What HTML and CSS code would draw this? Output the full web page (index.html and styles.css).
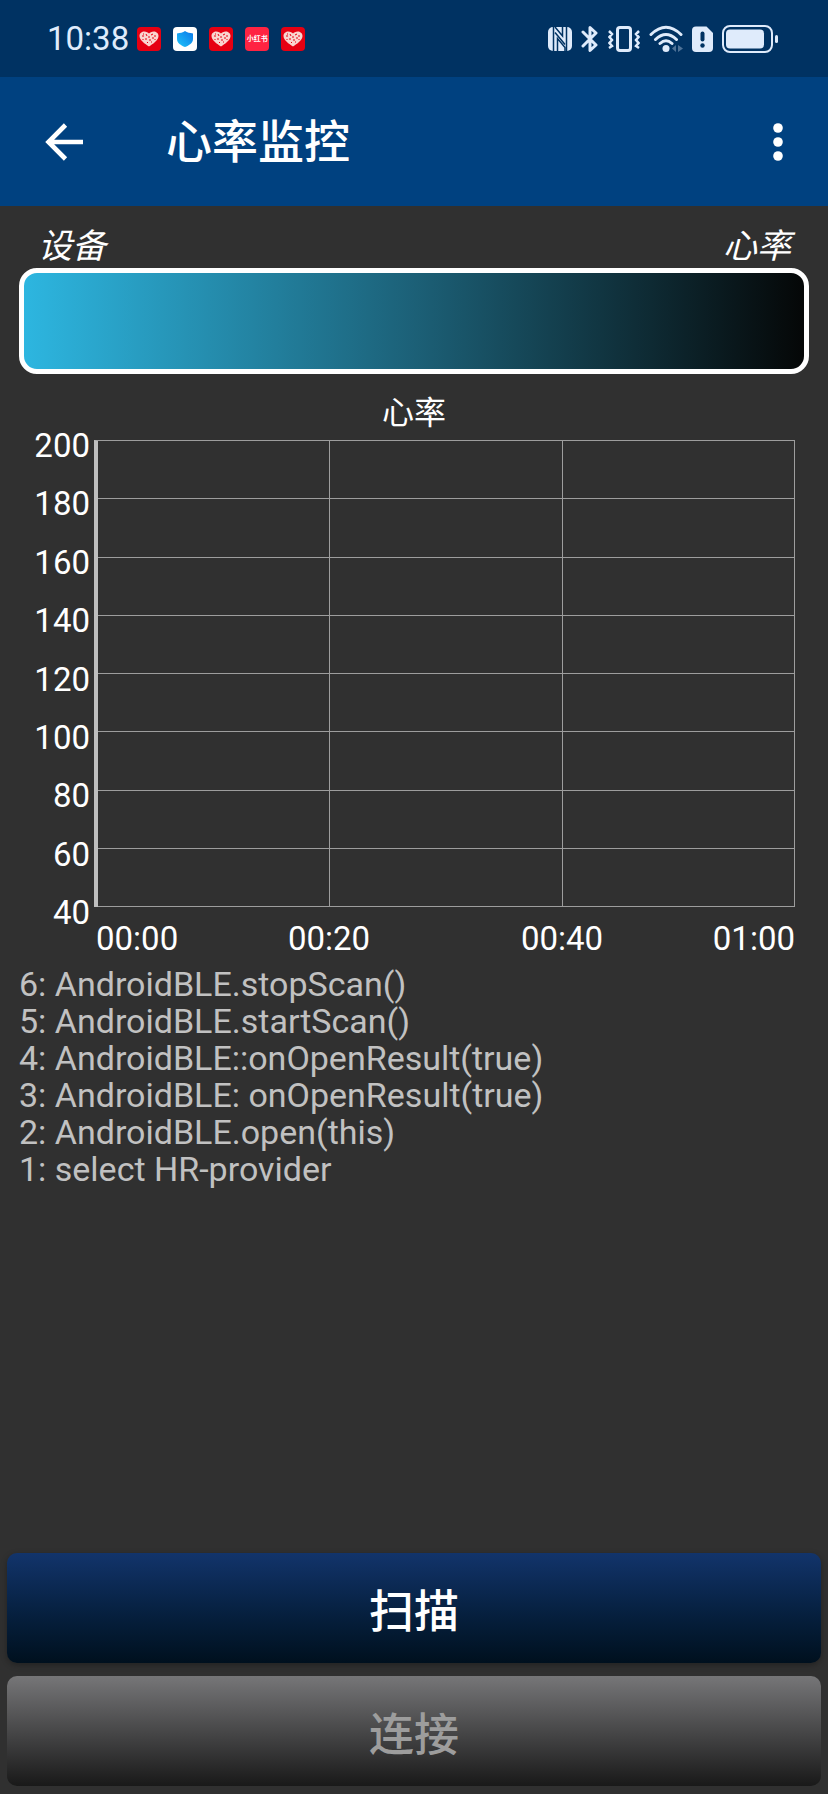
FILE: index.html
```html
<!DOCTYPE html>
<html lang="zh-CN">
<head>
  <meta charset="UTF-8" />
  <meta name="viewport" content="width=device-width, initial-scale=1" />
  <title>心率监控</title>
  <link rel="stylesheet" href="styles.css">
</head>
<body>

<!-- shared shape for the notification icons -->
<svg class="defs" width="0" height="0" aria-hidden="true">
  <symbol id="heartApp" viewBox="0 0 24 24">
    <rect width="24" height="24" rx="4" fill="#e60012" />
    <path d="M12 19.500C8 17 2.500 13 2.500 9C2.500 6 5 4.500 7.200 4.500C9.500 4.500 11 5.500 12 6.500C13 5.500 14.500 4.500 16.800 4.500C19 4.500 21.500 6 21.500 9C21.500 13 16 17 12 19.500Z" fill="#f9d5cf" />
    <path d="M5 9h2M9 7l1 2M8 12h2M12 9v2M14 8l2-1M15 11h2M18 8v2M12 13h2M10 15l1 1M6 7h1M18 12v1M14 15h1M6 12v1" fill="none" stroke="#e60012" stroke-width="1" />
  </symbol>
</svg>

<div class="status-bar">
  <div class="status-left">
    <span class="clock">10:38</span>
    <div class="notifications">
      <svg class="app-icon" viewBox="0 0 24 24"><use href="#heartApp" /></svg>
      <svg class="app-icon" viewBox="0 0 24 24">
        <defs>
          <linearGradient id="shieldFill" x1="0" y1="1" x2="1" y2="0">
            <stop offset="0" stop-color="#20c4f8" />
            <stop offset="1" stop-color="#0a78ea" />
          </linearGradient>
        </defs>
        <rect width="24" height="24" rx="4" fill="#fff" />
        <path d="M12 4C14 5.500 17 6 20 6.500V12C20 16 16 18.500 12 20C8 18.500 4 16 4 12V6.500C7 6 10 5.500 12 4Z" fill="url(#shieldFill)" />
      </svg>
      <svg class="app-icon" viewBox="0 0 24 24"><use href="#heartApp" /></svg>
      <span class="app-icon app-red">小红书</span>
      <svg class="app-icon" viewBox="0 0 24 24"><use href="#heartApp" /></svg>
    </div>
  </div>
  <div class="status-right">
    <!-- nfc -->
    <svg width="24" height="26" viewBox="0 0 24 26">
      <rect y="1" width="24" height="24" rx="5" fill="currentColor" />
      <path d="M5.500 1V25M18.500 1V25" stroke="#003262" stroke-width="1.500" />
      <path d="M9.500 25V12.500L17 21.500V25M7 1L14.500 10V1" fill="none" stroke="#003262" stroke-width="1.500" />
      <path d="M7 6.500L17 18.500" stroke="#003262" stroke-width="1.500" />
    </svg>
    <!-- bluetooth -->
    <svg width="18" height="28" viewBox="0 0 18 28">
      <path d="M2 7L15 20L9 25.500V2.500L15 8L2 21" fill="none" stroke="currentColor" stroke-width="3" stroke-linecap="round" stroke-linejoin="round" />
    </svg>
    <!-- vibrate -->
    <svg width="32" height="26" viewBox="0 0 32 26">
      <rect x="9.500" y="1.500" width="13" height="23" rx="2.500" fill="none" stroke="currentColor" stroke-width="3" />
      <path d="M1 5L4 8L1.500 11L4 14L1.500 17L4 20L1 22M31 5L28 8L30.500 11L28 14L30.500 17L28 20L31 22" fill="none" stroke="currentColor" stroke-width="2.500" />
    </svg>
    <!-- wifi -->
    <svg width="34" height="28" viewBox="0 0 34 28">
      <path d="M2 9.500Q17 -5 32 9.500M6.500 14.500Q17 4.500 27.500 14.500M11 18.500Q17 13 23 18.500" fill="none" stroke="currentColor" stroke-width="3" stroke-linecap="round" />
      <circle cx="17" cy="23.500" r="3.500" fill="currentColor" />
      <path d="M23 23.500L27 20V27ZM34 23.500L29 20V27Z" fill="currentColor" opacity="0.350" />
    </svg>
    <!-- sim alert -->
    <svg width="21" height="26" viewBox="0 0 21 26">
      <path d="M4 0.500H14.500L21 7V22Q21 26 17 26H4Q0 26 0 22V4.500Q0 0.500 4 0.500Z" fill="currentColor" />
      <path d="M10.500 7.500V13.500" stroke="#003262" stroke-width="4" stroke-linecap="round" />
      <circle cx="10.500" cy="19.500" r="2.200" fill="#003262" />
    </svg>
    <!-- battery -->
    <svg width="56" height="28" viewBox="0 0 56 28">
      <rect x="1" y="1" width="49" height="26" rx="7" fill="none" stroke="currentColor" stroke-width="2" />
      <rect x="4" y="4.500" width="38" height="19" rx="4" fill="currentColor" />
      <rect x="53" y="10" width="3" height="8" rx="1.500" fill="currentColor" />
    </svg>
  </div>
</div>

<header>
  <button class="icon-btn" aria-label="返回">
    <svg width="38" height="38" viewBox="0 0 38 38">
      <path d="M20.500 2L3.500 19L20.500 36M3.500 19H38" fill="none" stroke="#fff" stroke-width="4.600" />
    </svg>
  </button>
  <h1>心率监控</h1>
  <button class="icon-btn" aria-label="更多">
    <svg width="10" height="38" viewBox="0 0 10 38">
      <circle cx="5" cy="5" r="4.800" fill="#fff" />
      <circle cx="5" cy="19" r="4.800" fill="#fff" />
      <circle cx="5" cy="33" r="4.800" fill="#fff" />
    </svg>
  </button>
</header>

<main>
  <div class="labels">
    <span>设备</span>
    <span>心率</span>
  </div>
  <div class="device-box"></div>

  <section class="chart" aria-label="心率">
    <h2>心率</h2>
    <div class="chart-body">
      <div class="y-axis">
        <span>200</span>
        <span>180</span>
        <span>160</span>
        <span>140</span>
        <span>120</span>
        <span>100</span>
        <span>80</span>
        <span>60</span>
        <span>40</span>
      </div>
      <div class="plot">
        <div class="row"><i></i><i></i><i></i></div>
        <div class="row"><i></i><i></i><i></i></div>
        <div class="row"><i></i><i></i><i></i></div>
        <div class="row"><i></i><i></i><i></i></div>
        <div class="row"><i></i><i></i><i></i></div>
        <div class="row"><i></i><i></i><i></i></div>
        <div class="row"><i></i><i></i><i></i></div>
        <div class="row"><i></i><i></i><i></i></div>
      </div>
      <div class="x-axis">
        <span>00:00</span>
        <span>00:20</span>
        <span>00:40</span>
        <span>01:00</span>
      </div>
    </div>
  </section>

  <div class="log">
    <p>6: AndroidBLE.stopScan()</p>
    <p>5: AndroidBLE.startScan()</p>
    <p>4: AndroidBLE::onOpenResult(true)</p>
    <p>3: AndroidBLE: onOpenResult(true)</p>
    <p>2: AndroidBLE.open(this)</p>
    <p>1: select HR-provider</p>
  </div>
</main>

<footer>
  <button class="btn">扫描</button>
  <button class="btn" disabled>连接</button>
</footer>

</body>
</html>
```
FILE: styles.css
```css
* {
  box-sizing: border-box;
}

body {
  margin: 0;
  min-height: 100vh;
  display: flex;
  flex-direction: column;
  background: #303030;
  color: #fff;
  font-family: Roboto, "Noto Sans CJK SC", sans-serif;
  font-size: 33px;
}

.defs {
  position: absolute;
}

/* status bar */
.status-bar {
  height: 77px;
  padding: 0 50px 0 47px;
  background: #003262;
  color: #dfebfb;
  display: flex;
  justify-content: space-between;
  align-items: center;
}

.status-left {
  display: flex;
  align-items: center;
  gap: 8px;
}

.clock {
  line-height: 40px;
}

.notifications {
  display: flex;
  gap: 12px;
}

.app-icon {
  width: 24px;
  height: 24px;
}

.app-red {
  border-radius: 4px;
  background: #ff2442;
  color: #fff;
  font-size: 7px;
  font-weight: bold;
  line-height: 24px;
  text-align: center;
}

.status-right {
  display: flex;
  align-items: center;
  gap: 9px;
}

/* toolbar */
header {
  height: 129px;
  padding: 0 45px;
  background: #004180;
  display: flex;
  align-items: center;
}

.icon-btn {
  padding: 0;
  border: none;
  background: none;
  display: flex;
  cursor: pointer;
}

h1 {
  flex: 1;
  margin: 0;
  padding-left: 83px;
  font-size: 46px;
  font-weight: 500;
  line-height: 60px;
}

main {
  flex: 1;
  padding: 18px 19px 0;
}

.labels {
  display: flex;
  justify-content: space-between;
  padding: 0 18px 0 19px;
  font-size: 34px;
  font-style: italic;
  line-height: 44px;
}

.device-box {
  height: 106px;
  border: 5px solid #fff;
  border-radius: 18px;
  background: linear-gradient(to right, #2db6e0, #1c6077 50%, #050707);
}

/* chart */
h2 {
  margin: 0;
  padding: 16px 0 4px;
  font-size: 32px;
  font-weight: 400;
  line-height: 46px;
  text-align: center;
}

.chart-body {
  display: grid;
  grid-template-columns: 75px 1fr;
  padding-right: 14px;
}

.y-axis {
  display: flex;
  flex-direction: column;
  justify-content: space-between;
  margin: -14px 4px -26px 0;
  text-align: right;
  line-height: 40px;
}

.plot {
  height: 467px;
  display: flex;
  flex-direction: column;
  border-left: 4px solid #bebebe;
  border-top: 1px solid #9d9d9d;
}

.row {
  flex: 1;
  display: grid;
  grid-template-columns: repeat(3, 1fr);
}

.row i {
  border: solid #9d9d9d;
  border-width: 0 1px 1px 0;
}

.x-axis {
  grid-column: 2;
  display: grid;
  grid-template-columns: 1fr 2fr 2fr 1fr;
  padding: 12px 0 0 2px;
  line-height: 40px;
  text-align: center;
}

.x-axis span:first-child {
  text-align: left;
}

.x-axis span:last-child {
  text-align: right;
}

.log {
  padding-top: 7px;
  color: #c1c1c1;
  font-size: 34px;
}

.log p {
  margin: 0;
  line-height: 37px;
}

/* bottom buttons */
footer {
  padding: 0 7px 8px;
  display: flex;
  flex-direction: column;
  gap: 13px;
}

.btn {
  height: 110px;
  border: none;
  border-radius: 10px;
  background: linear-gradient(#12346b, #06203f 55%, #00101e);
  box-shadow: 0 2px 6px rgba(0, 0, 0, 0.3);
  color: #fff;
  font-family: inherit;
  font-size: 45px;
  font-weight: 500;
  cursor: pointer;
}

.btn:disabled {
  background: linear-gradient(#767678, #191919);
  box-shadow: none;
  color: #9d9d9d;
  cursor: default;
}
```
